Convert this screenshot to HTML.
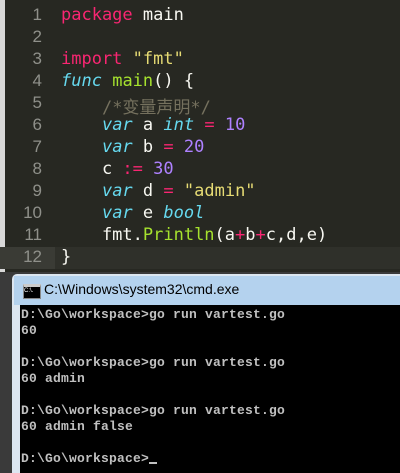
<html><head><style>
body{margin:0;width:400px;height:473px;overflow:hidden;background:#272822;position:relative;font-family:"Liberation Mono",monospace}
.ed{position:absolute;left:0;top:0;width:400px;height:272px;background:#272822}
.ln{position:absolute;left:0;width:42px;text-align:right;color:#8f908a;font:17px "Liberation Sans",sans-serif}
.cd{position:absolute;left:61px;font:17px "DejaVu Sans Mono","Liberation Mono",monospace;color:#f8f8f2;white-space:pre}
.k{color:#f92672}.s{color:#e6db74}.f{color:#a6e22e}.t{color:#66d9ef;font-style:italic}.n{color:#ae81ff}.c{color:#75715e}
.con{position:absolute;left:21px;font:bold 13px "Liberation Mono",monospace;color:#c0c0c0;white-space:pre;letter-spacing:0.2px}
</style></head><body>
<div class="ed"></div>
<div style="position:absolute;left:0;top:0;width:5px;height:272px;background:#d8d8d8"></div>
<div style="position:absolute;left:0;top:247px;width:55px;height:22px;background:#3a3b35"></div>
<div style="position:absolute;left:55px;top:247px;width:345px;height:22px;background:#2f302a"></div>
<div class="ln" style="top:5px">1</div><div class="ln" style="top:27px">2</div><div class="ln" style="top:49px">3</div><div class="ln" style="top:71px">4</div><div class="ln" style="top:93px">5</div><div class="ln" style="top:115px">6</div><div class="ln" style="top:137px">7</div><div class="ln" style="top:159px">8</div><div class="ln" style="top:181px">9</div><div class="ln" style="top:203px">10</div><div class="ln" style="top:225px">11</div><div class="ln" style="top:247px">12</div>
<div class="cd" style="top:5px"><span class="k">package</span> main</div>
<div class="cd" style="top:49px"><span class="k">import</span> <span class="s">"fmt"</span></div>
<div class="cd" style="top:71px"><span class="t">func</span> <span class="f">main</span>() {</div>
<div class="cd" style="top:93px;font-family:'DejaVu Sans Mono','Noto Sans CJK SC',monospace">    <span class="c">/*变量声明*/</span></div>
<div class="cd" style="top:115px">    <span class="t">var</span> a <span class="t">int</span> <span class="k">=</span> <span class="n">10</span></div>
<div class="cd" style="top:137px">    <span class="t">var</span> b <span class="k">=</span> <span class="n">20</span></div>
<div class="cd" style="top:159px">    c <span class="k">:=</span> <span class="n">30</span></div>
<div class="cd" style="top:181px">    <span class="t">var</span> d <span class="k">=</span> <span class="s">"admin"</span></div>
<div class="cd" style="top:203px">    <span class="t">var</span> e <span class="t">bool</span></div>
<div class="cd" style="top:225px">    fmt.<span class="f">Println</span>(a<span class="k">+</span>b<span class="k">+</span>c,d,e)</div>
<div class="cd" style="top:247px">}</div>
<div style="position:absolute;left:0;top:272px;width:400px;height:201px;background:#3a3a3a"></div>
<div style="position:absolute;left:12px;top:274px;width:388px;height:199px;background:#dce6f0;border-radius:5px 0 0 0"></div>
<div style="position:absolute;left:14px;top:276px;width:386px;height:29px;background:#b4d2ee"></div>
<div style="position:absolute;left:23px;top:284px;width:16px;height:11px;background:#000;border:1px solid #888;border-top:3px solid #ccc"></div>
<div style="position:absolute;left:24px;top:288px;font:6px 'Liberation Sans';color:#fff">C:\.</div>
<div style="position:absolute;left:44px;top:281px;font:14px 'Liberation Sans',sans-serif;color:#000">C:\Windows\system32\cmd.exe</div>
<div style="position:absolute;left:20px;top:305px;width:380px;height:168px;background:#000"></div>
<div class="con" style="top:307px">D:\Go\workspace>go run vartest.go</div>
<div class="con" style="top:323px">60</div>
<div class="con" style="top:355px">D:\Go\workspace>go run vartest.go</div>
<div class="con" style="top:371px">60 admin</div>
<div class="con" style="top:403px">D:\Go\workspace>go run vartest.go</div>
<div class="con" style="top:419px">60 admin false</div>
<div class="con" style="top:451px">D:\Go\workspace><span style="display:inline-block;width:8px;height:2px;background:#c0c0c0;vertical-align:-2px"></span></div>
</body></html>
